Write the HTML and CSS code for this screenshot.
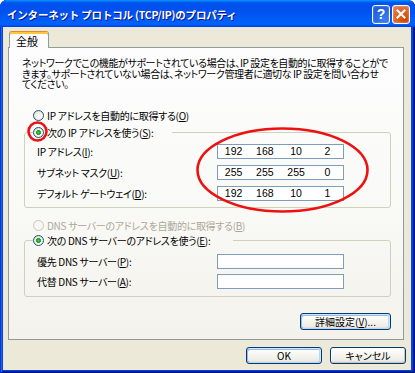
FILE: index.html
```html
<!DOCTYPE html>
<html lang="ja">
<head>
<meta charset="utf-8">
<title>インターネット プロトコル (TCP/IP)のプロパティ</title>
<link rel="stylesheet" href="styles.css">
</head>
<body>
<div class="window">
  <div class="titlebar">
    <span class="title">インターネット プロトコル (TCP/IP)のプロパティ</span>
    <div class="tb-buttons">
      <span class="tb-btn help">?</span>
      <span class="tb-btn close"><svg width="10" height="10" viewBox="0 0 10 10"><path d="M1.5 1.5 L8.5 8.5 M8.5 1.5 L1.5 8.5" stroke="#fff" stroke-width="2" stroke-linecap="square"/></svg></span>
    </div>
  </div>
  <div class="client">
    <div class="tabs"><div class="tab">全般</div></div>
    <div class="panel">
      <p class="desc"><span class="line">ネットワークでこの機能がサポートされている場合は、IP 設定を自動的に取得することがで</span><span class="line">きます。サポートされていない場合は、ネットワーク管理者に適切な IP 設定を問い合わせ</span><span class="line">てください。</span></p>
      <div class="radio-row first"><span class="radio"></span><span>IP アドレスを自動的に取得する(<u>O</u>)</span></div>
      <fieldset class="group group-ip">
        <legend class="legend legend-ip"><span class="radio checked"></span><span>次の IP アドレスを使う(<u>S</u>):</span></legend>
        <div class="grid">
          <span class="lbl">IP アドレス(<u>I</u>):</span>
          <div class="ipbox"><span>192</span><span>168</span><span>10</span><span>2</span></div>
          <span class="lbl">サブネット マスク(<u>U</u>):</span>
          <div class="ipbox"><span>255</span><span>255</span><span>255</span><span>0</span></div>
          <span class="lbl">デフォルト ゲートウェイ(<u>D</u>):</span>
          <div class="ipbox"><span>192</span><span>168</span><span>10</span><span>1</span></div>
        </div>
      </fieldset>
      <div class="radio-row disabled second"><span class="radio"></span><span>DNS サーバーのアドレスを自動的に取得する(<u>B</u>)</span></div>
      <fieldset class="group group-dns">
        <legend class="legend legend-dns"><span class="radio checked"></span><span>次の DNS サーバーのアドレスを使う(<u>E</u>):</span></legend>
        <div class="grid grid-dns">
          <span class="lbl">優先 DNS サーバー(<u>P</u>):</span>
          <div class="ipbox"></div>
          <span class="lbl">代替 DNS サーバー(<u>A</u>):</span>
          <div class="ipbox"></div>
        </div>
      </fieldset>
      <button class="btn adv">詳細設定(<u>V</u>)...</button>
    </div>
    <div class="buttons">
      <button class="btn ok">OK</button>
      <button class="btn">キャンセル</button>
    </div>
  </div>
  <svg class="annot" width="415" height="373" viewBox="0 0 415 373">
    <ellipse cx="282.5" cy="170" rx="85" ry="41.5" fill="none" stroke="#EE1111" stroke-width="2.6"/>
    <circle cx="37.5" cy="131.5" r="9" fill="none" stroke="#EE1111" stroke-width="2.6"/>
  </svg>
</div>
</body>
</html>
```

FILE: styles.css
```css
* { box-sizing: border-box; }
body {
  margin: 0;
  background: #ffffff;
  font-family: "Noto Sans CJK JP", sans-serif;
  font-size: 10px;
  color: #000;
}
.window {
  position: relative;
  width: 415px;
  height: 373px;
  background: #0843D6;
  border-radius: 7px 7px 0 0;
  display: flex;
  flex-direction: column;
  overflow: hidden;
  box-shadow: inset 1px 0 #0831D9, inset -1px -1px #00138C, inset 2px 0 #166AEE, inset -2px -2px #001EA0;
}
.titlebar {
  height: 27px;
  flex: none;
  display: flex;
  align-items: center;
  padding: 1px 5px 0 7px;
  background: linear-gradient(180deg, #0997FF 0%, #0053EE 10%, #0050EE 40%, #0062F7 85%, #005BFF 92%, #003DD7 100%);
  border-radius: 7px 7px 0 0;
}
.title {
  flex: 1;
  color: #fff;
  font-weight: bold;
  font-size: 10.5px;
  letter-spacing: -0.2px;
  text-shadow: 1px 1px #0F1089;
  white-space: nowrap;
}
.tb-buttons { display: flex; gap: 2px; }
.tb-btn {
  width: 18px;
  height: 19px;
  border: 1px solid #fff;
  border-radius: 3px;
  display: flex;
  align-items: center;
  justify-content: center;
  color: #fff;
  font-family: "Liberation Sans", sans-serif;
  font-weight: bold;
  font-size: 14px;
}
.help {
  background: radial-gradient(circle at 70% 80%, #3A80F3 0%, #2663E0 60%, #1E56D6 100%);
  box-shadow: inset 0 0 2px #8CB1F8;
}
.close {
  background: radial-gradient(circle at 80% 85%, #CC4600 0%, #DC6527 50%, #E3805A 100%);
  box-shadow: inset 0 0 2px #F2B8A0;
}
.client {
  flex: 1;
  margin: 0 4px 3px 3px;
  background: #ECE9D8;
  padding: 4px 5px 0 5px;
  display: flex;
  flex-direction: column;
}
.tabs {
  display: flex;
  padding-left: 1px;
  height: 17px;
  margin-bottom: -1px;
  position: relative;
  z-index: 1;
}
.tab {
  width: 40px;
  height: 17px;
  background: #FCFCFE;
  border: 1px solid #919B9C;
  border-top: 1px solid #E68B2C;
  border-bottom: none;
  border-radius: 3px 3px 0 0;
  box-shadow: inset 0 2px #FFC73C;
  padding: 3px 0 0 6px;
  font-size: 11px;
  line-height: 13px;
}
.panel {
  height: 293px;
  margin-right: 2px;
  border: 1px solid #919B9C;
  background: linear-gradient(180deg, #FDFDFE 0%, #F9F9F6 55%, #F3F2EC 100%);
  padding: 0 12px 0 13px;
  display: flex;
  flex-direction: column;
}
.desc {
  margin: 10px 0 0 0;
  font-size: 10px;
  line-height: 10.5px;
  white-space: nowrap;
  font-feature-settings: "palt";
  letter-spacing: -0.4px;
  display: flex;
  flex-direction: column;
}
.line { display: block; height: 10.5px; }
.radio-row {
  display: flex;
  align-items: center;
  gap: 3px;
  height: 14px;
  margin-left: 11px;
  white-space: nowrap;
  font-feature-settings: "palt";
  letter-spacing: -0.3px;
}
.radio-row.first { margin-top: 19px; }
.radio-row.second { margin-top: 11px; }
.radio {
  flex: none;
  width: 11px;
  height: 11px;
  border-radius: 50%;
  border: 1px solid #1C5180;
  background: radial-gradient(circle at 65% 70%, #FFFFFF 0%, #F4F3EE 40%, #DCD8C8 100%);
}
.radio.checked {
  background: radial-gradient(circle, #4CD44C 0%, #21A121 1.6px, #2DB22D 2.4px, transparent 2.6px), radial-gradient(circle at 65% 70%, #FFFFFF 0%, #F4F3EE 40%, #DCD8C8 100%);
}
.disabled { color: #ACA899; }
.disabled .radio { border-color: #CAC8BB; background: #F7F6F2; }
.group {
  margin: 3px 0 0 2px;
  padding: 4px 0 6px 12px;
  border: 1px solid #D0D0BF;
  border-radius: 3px;
  min-width: 0;
}
.group-dns { margin-top: 1px; padding-top: 6px; padding-bottom: 7px; }
.legend {
  display: flex;
  align-items: center;
  gap: 3px;
  height: 14px;
  padding: 0;
  margin-left: -4px;
  white-space: nowrap;
  font-feature-settings: "palt";
  letter-spacing: -0.3px;
}
.legend-ip { width: 139px; }
.legend-dns { width: 200px; }
.grid {
  display: grid;
  grid-template-columns: 180px 127px;
  grid-auto-rows: 15px;
  row-gap: 6px;
  align-items: center;
}
.grid-dns { row-gap: 5px; }
.lbl {
  white-space: nowrap;
  font-feature-settings: "palt";
  letter-spacing: -0.3px;
}
.ipbox {
  height: 15px;
  border: 1px solid #7F9DB9;
  background: #FFFFFF;
  display: grid;
  grid-template-columns: repeat(4, 1fr);
  align-items: center;
  font-family: "Liberation Sans", sans-serif;
  font-size: 10.5px;
  line-height: 13px;
  text-align: center;
}
.btn {
  height: 17px;
  border: 1px solid #003C74;
  border-radius: 3px;
  background: linear-gradient(180deg, #FFFFFF 0%, #F5F4EF 50%, #ECEBE6 85%, #D6D0C5 100%);
  box-shadow: inset 1px 1px #FFFFFF, inset -1px -1px #C9C6B8;
  font-family: "Noto Sans CJK JP", sans-serif;
  font-size: 10px;
  line-height: 13px;
  padding: 0;
  color: #000;
  font-feature-settings: "palt";
}
.btn.ok, .btn.adv {
  box-shadow: inset -1px 1px #CEE7FF, inset 1px 2px #98B8EA, inset -2px -1px #BCD4F6, inset 1px -1px #89ADE4;
}
.adv {
  align-self: flex-end;
  width: 91px;
  margin-top: 16px;
}
.buttons {
  display: flex;
  justify-content: flex-end;
  gap: 8px;
  margin-top: 7px;
}
.buttons .btn { width: 76px; }
.annot {
  position: absolute;
  left: 0;
  top: 0;
  pointer-events: none;
}
```
